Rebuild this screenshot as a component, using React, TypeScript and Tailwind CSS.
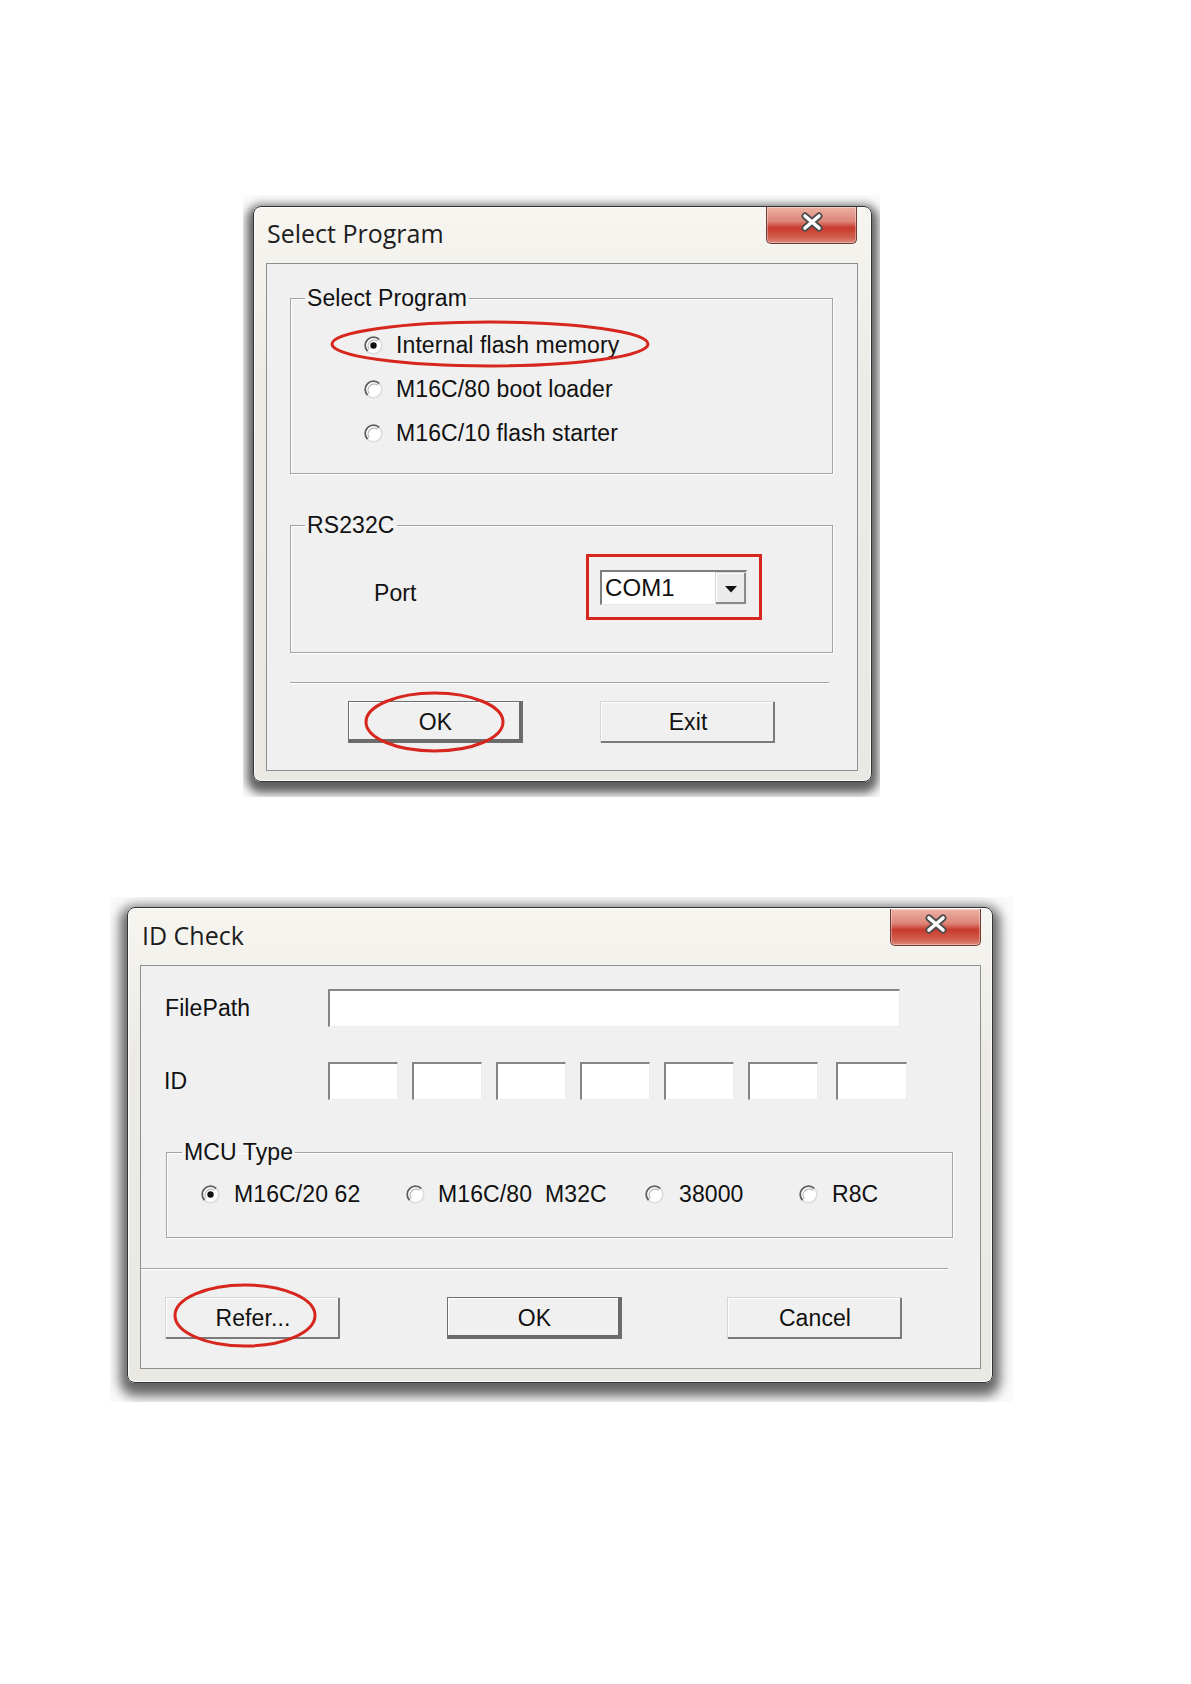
import React from "react";

function Radio({ checked }: { checked?: boolean }) {
  return (
    <svg width="19" height="19" viewBox="0 0 19 19" className="shrink-0">
      <circle cx="9.5" cy="9.5" r="8.3" fill="#ffffff" />
      <path d="M15.37 3.63 A8.3 8.3 0 0 0 3.63 15.37" fill="none" stroke="#5e5e5e" strokeWidth="1.8" />
      <path d="M3.63 15.37 A8.3 8.3 0 0 0 15.37 3.63" fill="none" stroke="#dcdcdc" strokeWidth="1.6" />
      <path d="M13.7 5.3 A6 6 0 0 0 5.3 13.7" fill="none" stroke="#b4b4b4" strokeWidth="1.2" />
      {checked && <circle cx="9.5" cy="9.5" r="3.2" fill="#111111" />}
    </svg>
  );
}

function CloseButton() {
  return (
    <div className="flex h-[37px] w-[91px] items-center justify-center rounded-b-[5px] border border-t-0 border-[#6d3b34] bg-[linear-gradient(180deg,#eeb2a6_0%,#dc8577_40%,#c8392c_58%,#d1604f_85%,#dd8a7c_100%)] pb-[6px] shadow-[inset_0_0_0_1px_rgba(255,255,255,0.35)]">
      <svg width="26" height="20" viewBox="0 0 26 20">
        <path d="M6 4 L20 16 M20 4 L6 16" stroke="#4b4b4b" strokeWidth="7" strokeLinecap="round" />
        <path d="M6 4 L20 16 M20 4 L6 16" stroke="#ffffff" strokeWidth="3.6" strokeLinecap="round" />
      </svg>
    </div>
  );
}

function DefaultButton({ children }: { children: React.ReactNode }) {
  return (
    <div className="flex h-[42px] w-[175px] items-center justify-center border border-[#6f6f6f] bg-[#f0f0f0] text-[#111] shadow-[inset_-3px_-3px_0_#6a6a6a,inset_1px_1px_0_#ffffff]">
      {children}
    </div>
  );
}

function PlainButton({ children }: { children: React.ReactNode }) {
  return (
    <div className="flex h-[42px] w-[175px] items-center justify-center border-l border-t border-[#d6d6d6] bg-[#f0f0f0] text-[#111] shadow-[inset_-2px_-2px_0_#7a7a7a,inset_1px_1px_0_#ffffff]">
      {children}
    </div>
  );
}

function Ellipse({ w, h, className }: { w: number; h: number; className: string }) {
  return (
    <svg width={w} height={h} viewBox={`0 0 ${w} ${h}`} className={className}>
      <ellipse cx={w / 2} cy={h / 2} rx={w / 2 - 2} ry={h / 2 - 2} fill="none" stroke="#d7261e" strokeWidth="3" />
    </svg>
  );
}

function Field({ className }: { className: string }) {
  return (
    <div
      className={`border-b border-l-2 border-r border-t-2 border-b-[#ececec] border-l-[#858585] border-r-[#ececec] border-t-[#858585] bg-white ${className}`}
    />
  );
}

function Separator({ className }: { className: string }) {
  return <div className={`h-[2px] border-b border-t border-b-white border-t-[#a3a3a3] ${className}`} />;
}

export default function App() {
  return (
    <div className="h-[1684px] w-[1191px] bg-white pt-[195px] font-['Liberation_Sans',Arial,sans-serif] text-[23px] tracking-[0.1px] text-[#111]">
      {/* Dialog 1 */}
      <div className="ml-[243px] h-[602px] w-[637px] overflow-hidden bg-[#fafafa] pl-[10px] pt-[11px]">
        <div className="flex h-[576px] w-[619px] flex-col rounded-[8px] border border-[#353535] bg-[linear-gradient(180deg,#f7f5f0,#edebe5_30%,#e9e8e3)] pl-[12px] pr-[14px] shadow-[inset_0_0_0_1px_rgba(255,255,255,0.85),0_5px_10px_6px_rgba(0,0,0,0.62)]">
          <div className="flex h-[56px] items-start justify-between">
            <div className="mt-[8px] pl-[1px] font-['Open_Sans',sans-serif] text-[25px] tracking-normal text-[#1d1d1d]">
              Select Program
            </div>
            <CloseButton />
          </div>
          <div className="h-[508px] w-[592px] border border-[#8f8f8f] bg-[#f0f0f0]">
            <fieldset className="ml-[23px] mt-[21px] w-[543px] border border-[#a3a3a3] shadow-[1px_1px_0_#ffffff,inset_1px_1px_0_#ffffff]">
              <legend className="ml-[14px] px-[2px] leading-[26px]">Select Program</legend>
              <div className="flex h-[162px] flex-col pl-[73px] pt-[12px]">
                <div className="relative flex h-[44px] items-center">
                  <Radio checked />
                  <span className="ml-[13px]">Internal flash memory</span>
                  <Ellipse w={320} h={48} className="absolute left-[-34px] top-[-3px]" />
                </div>
                <div className="flex h-[44px] items-center">
                  <Radio />
                  <span className="ml-[13px]">M16C/80 boot loader</span>
                </div>
                <div className="flex h-[44px] items-center">
                  <Radio />
                  <span className="ml-[13px]">M16C/10 flash starter</span>
                </div>
              </div>
            </fieldset>
            <fieldset className="ml-[23px] mt-[38px] w-[543px] border border-[#a3a3a3] shadow-[1px_1px_0_#ffffff,inset_1px_1px_0_#ffffff]">
              <legend className="ml-[14px] px-[2px] leading-[26px]">RS232C</legend>
              <div className="flex h-[114px] items-start pl-[83px] pt-[16px]">
                <span className="mt-[22px] w-[212px]">Port</span>
                <div className="h-[66px] w-[176px] border-[3px] border-[#d7261e] pl-[11px] pt-[13px]">
                  <div className="flex h-[35px] w-[147px] items-stretch border-b border-l-2 border-r border-t-2 border-b-[#e8e8e8] border-l-[#7e7e7e] border-r-[#e8e8e8] border-t-[#7e7e7e] bg-white">
                    <span className="flex flex-1 items-center pl-[3px] text-[24px] leading-none">COM1</span>
                    <div className="flex w-[31px] items-center justify-center border-l border-t border-[#d8d8d8] bg-[#ebebeb] shadow-[inset_-2px_-2px_0_#8a8a8a,inset_1px_1px_0_#ffffff]">
                      <svg width="14" height="8" viewBox="0 0 14 8">
                        <path d="M1 1 L13 1 L7 7.5 Z" fill="#111" />
                      </svg>
                    </div>
                  </div>
                </div>
              </div>
            </fieldset>
            <Separator className="ml-[23px] mt-[29px] w-[539px]" />
            <div className="ml-[81px] mt-[17px] flex gap-[77px]">
              <div className="relative">
                <DefaultButton>OK</DefaultButton>
                <Ellipse w={141} h={62} className="absolute left-[16px] top-[-10px]" />
              </div>
              <PlainButton>Exit</PlainButton>
            </div>
          </div>
        </div>
      </div>

      {/* Dialog 2 */}
      <div className="ml-[110px] mt-[100px] h-[505px] w-[903px] overflow-hidden bg-[#fafafa] pl-[17px] pt-[10px]">
        <div className="flex h-[476px] w-[866px] flex-col rounded-[8px] border border-[#353535] bg-[linear-gradient(180deg,#f7f5f0,#edebe5_30%,#e9e8e3)] pl-[12px] pr-[11px] shadow-[inset_0_0_0_1px_rgba(255,255,255,0.85),0_6px_12px_7px_rgba(0,0,0,0.6)]">
          <div className="flex h-[57px] items-start justify-between">
            <div className="mt-[9px] pl-[2px] font-['Open_Sans',sans-serif] text-[25px] tracking-normal text-[#1d1d1d]">
              ID Check
            </div>
            <div className="mt-[1px]">
              <CloseButton />
            </div>
          </div>
          <div className="h-[404px] w-[841px] border border-[#8f8f8f] bg-[#f0f0f0]">
            <div className="ml-[24px] mt-[23px] flex items-center">
              <span className="w-[163px]">FilePath</span>
              <Field className="h-[38px] w-[572px]" />
            </div>
            <div className="ml-[23px] mt-[35px] flex items-center">
              <span className="w-[164px]">ID</span>
              <div className="flex gap-[14px]">
                <Field className="h-[38px] w-[70px]" />
                <Field className="h-[38px] w-[70px]" />
                <Field className="h-[38px] w-[70px]" />
                <Field className="h-[38px] w-[70px]" />
                <Field className="h-[38px] w-[70px]" />
                <Field className="h-[38px] w-[70px]" />
                <Field className="ml-[4px] h-[38px] w-[71px]" />
              </div>
            </div>
            <fieldset className="ml-[25px] mt-[39px] w-[787px] border border-[#a3a3a3] shadow-[1px_1px_0_#ffffff,inset_1px_1px_0_#ffffff]">
              <legend className="ml-[15px] px-[2px] leading-[26px]">MCU Type</legend>
              <div className="h-[72px] pl-[34px]">
                <div className="flex h-[58px] items-center">
                  <div className="flex w-[205px] items-center">
                    <Radio checked />
                    <span className="ml-[14px]">M16C/20 62</span>
                  </div>
                  <div className="flex w-[239px] items-center">
                    <Radio />
                    <span className="ml-[13px] whitespace-pre">M16C/80  M32C</span>
                  </div>
                  <div className="flex w-[154px] items-center">
                    <Radio />
                    <span className="ml-[15px]">38000</span>
                  </div>
                  <div className="flex items-center">
                    <Radio />
                    <span className="ml-[14px]">R8C</span>
                  </div>
                </div>
              </div>
            </fieldset>
            <Separator className="mt-[30px] w-[807px]" />
            <div className="ml-[24px] mt-[27px] flex">
              <div className="relative">
                <PlainButton>Refer...</PlainButton>
                <Ellipse w={144} h={65} className="absolute left-[8px] top-[-14px]" />
              </div>
              <div className="ml-[107px]">
                <DefaultButton>OK</DefaultButton>
              </div>
              <div className="ml-[105px]">
                <PlainButton>Cancel</PlainButton>
              </div>
            </div>
          </div>
        </div>
      </div>
    </div>
  );
}
